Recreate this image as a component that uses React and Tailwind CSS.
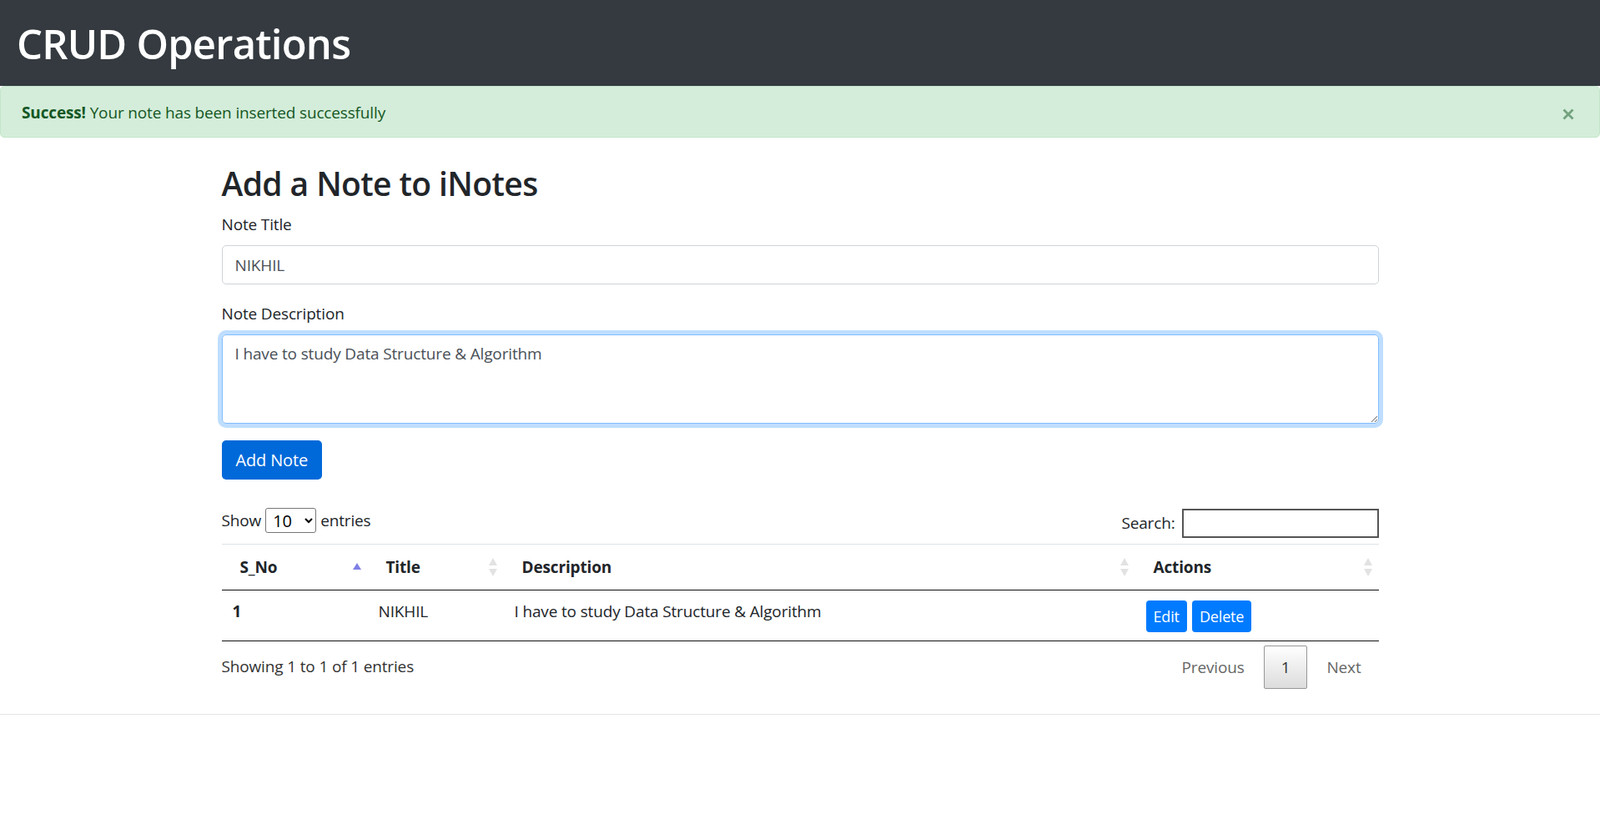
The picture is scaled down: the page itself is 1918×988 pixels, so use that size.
import { useState } from 'react';

function SortIcon({ dir }) {
  // DataTables style sort markers
  if (dir === 'asc') {
    return (
      <svg width="10" height="24" viewBox="0 0 10 24" className="shrink-0">
        <path d="M0 15 L5 7 L10 15 Z" fill="#7f7fe6" />
      </svg>
    );
  }
  return (
    <svg width="10" height="24" viewBox="0 0 10 24" className="shrink-0">
      <path d="M0 10 L5 1 L10 10 Z" fill="#e2e2e2" />
      <path d="M0 14 L5 23 L10 14 Z" fill="#e2e2e2" />
    </svg>
  );
}

function HeadCell({ label, width, dir }) {
  return (
    <th
      className="text-left font-bold px-0 py-0 border-t border-[#dee2e6] border-b border-b-[#111]"
      style={{ width }}
    >
      <div className="flex items-center justify-between pl-[22px] pr-[8px] h-[54px]">
        <span>{label}</span>
        <SortIcon dir={dir} />
      </div>
    </th>
  );
}

export default function App() {
  const [title, setTitle] = useState('NIKHIL');
  const [desc, setDesc] = useState('I have to study Data Structure & Algorithm');
  const [showAlert, setShowAlert] = useState(true);

  return (
    <div className="min-h-screen bg-white text-[#212529] font-['Open_Sans','Noto_Sans',sans-serif] text-[19px] leading-[30px] tracking-[-0.15px]">
      {/* Navbar */}
      <nav className="h-[103px] bg-[#343a40] flex items-center px-5">
        <h1 className="text-[49px] leading-[60px] font-semibold text-white tracking-[-0.8px]">CRUD Operations</h1>
      </nav>

      {/* Alert */}
      {showAlert && (
        <div className="relative h-[62px] border border-[#c3e6cb] bg-[#d4edda] text-[#155724] rounded-[5px] flex items-center pl-[25px]">
          <p className="pt-[2px]">
            <strong className="font-bold">Success!</strong> Your note has been inserted successfully
          </p>
          <button
            type="button"
            onClick={() => setShowAlert(false)}
            className="absolute right-[30px] top-[26px] w-[14px] h-[14px] opacity-50"
          >
            <svg viewBox="0 0 14 14" width="14" height="14">
              <path d="M1.5 1.5 L12.5 12.5 M12.5 1.5 L1.5 12.5" stroke="#155724" strokeWidth="2.8" />
            </svg>
          </button>
        </div>
      )}

      {/* Form */}
      <div className="w-[1387px] mx-auto mt-[30px]">
        <h2 className="text-[39px] leading-[50px] font-semibold mb-[9px] tracking-[-0.6px]">Add a Note to iNotes</h2>
        <form onSubmit={e => e.preventDefault()}>
          <div className="mb-[20px]">
            <label htmlFor="title" className="block mb-[10px]">Note Title</label>
            <input
              id="title"
              value={title}
              onChange={e => setTitle(e.target.value)}
              className="block w-full h-[47px] px-[15px] text-[#495057] border border-[#ced4da] rounded-[5px] outline-none"
            />
          </div>
          <div className="mb-[20px]">
            <label htmlFor="desc" className="block mb-[10px]">Note Description</label>
            <textarea
              id="desc"
              rows={3}
              value={desc}
              onChange={e => setDesc(e.target.value)}
              className="block w-full h-[107px] px-[15px] py-[7px] text-[#495057] border border-[#80bdff] rounded-[5px] outline-none shadow-[0_0_0_5px_rgba(0,123,255,0.25)] resize-y"
            />
          </div>
          <button
            type="submit"
            className="h-[47px] px-[17px] rounded-[5px] bg-[#0069d9] text-white text-[20px]"
          >
            Add Note
          </button>
        </form>
      </div>

      {/* Table */}
      <div className="w-[1387px] mx-auto mt-[30px]">
        <div className="flex items-center justify-between h-[38px]">
          <div className="flex items-center gap-[5px]">
            <span>Show</span>
            <select className="h-[30px] w-[61px] border border-[#767676] rounded-[3px] pl-[4px] text-[20px] leading-[24px] text-black bg-white">
              <option>10</option>
              <option>25</option>
              <option>50</option>
              <option>100</option>
            </select>
            <span>entries</span>
          </div>
          <div className="flex items-center gap-[8px] pt-[6px]">
            <span>Search:</span>
            <input className="w-[236px] h-[35px] border-2 border-[#555] outline-none px-[4px]" />
          </div>
        </div>

        <table className="w-full mt-[9px] border-collapse">
          <thead>
            <tr>
              <HeadCell label="S_No" width={175} dir="asc" />
              <HeadCell label="Title" width={163} />
              <HeadCell label="Description" width={757} />
              <HeadCell label="Actions" width={292} />
            </tr>
          </thead>
          <tbody>
            <tr className="border-b border-[#111] align-top">
              <td className="px-[13px] pt-[10px] h-[61px] font-bold">1</td>
              <td className="px-[13px] pt-[10px]">NIKHIL</td>
              <td className="px-[13px] pt-[10px]">I have to study Data Structure &amp; Algorithm</td>
              <td className="px-[13px] pt-[12px]">
                <div className="flex gap-[6px]">
                  <button className="h-[38px] px-[9px] rounded-[4px] bg-[#007bff] text-white text-[18px]">Edit</button>
                  <button className="h-[38px] px-[9px] rounded-[4px] bg-[#007bff] text-white text-[18px]">Delete</button>
                </div>
              </td>
            </tr>
          </tbody>
        </table>

        <div className="flex justify-between items-start pt-[5px] text-[#333]">
          <div className="pt-[10px]">Showing 1 to 1 of 1 entries</div>
          <div className="flex items-center">
            <span className="px-[20px] py-[10px] text-[#666] border border-transparent">Previous</span>
            <span className="ml-[2px] px-[20px] py-[10px] border border-[#979797] rounded-[2px] bg-gradient-to-b from-white to-[#dcdcdc] text-[#333]">1</span>
            <span className="ml-[2px] px-[20px] py-[10px] text-[#666] border border-transparent">Next</span>
          </div>
        </div>
      </div>

      <hr className="mt-[30px] border-t border-[#e5e5e5]" />
    </div>
  );
}
